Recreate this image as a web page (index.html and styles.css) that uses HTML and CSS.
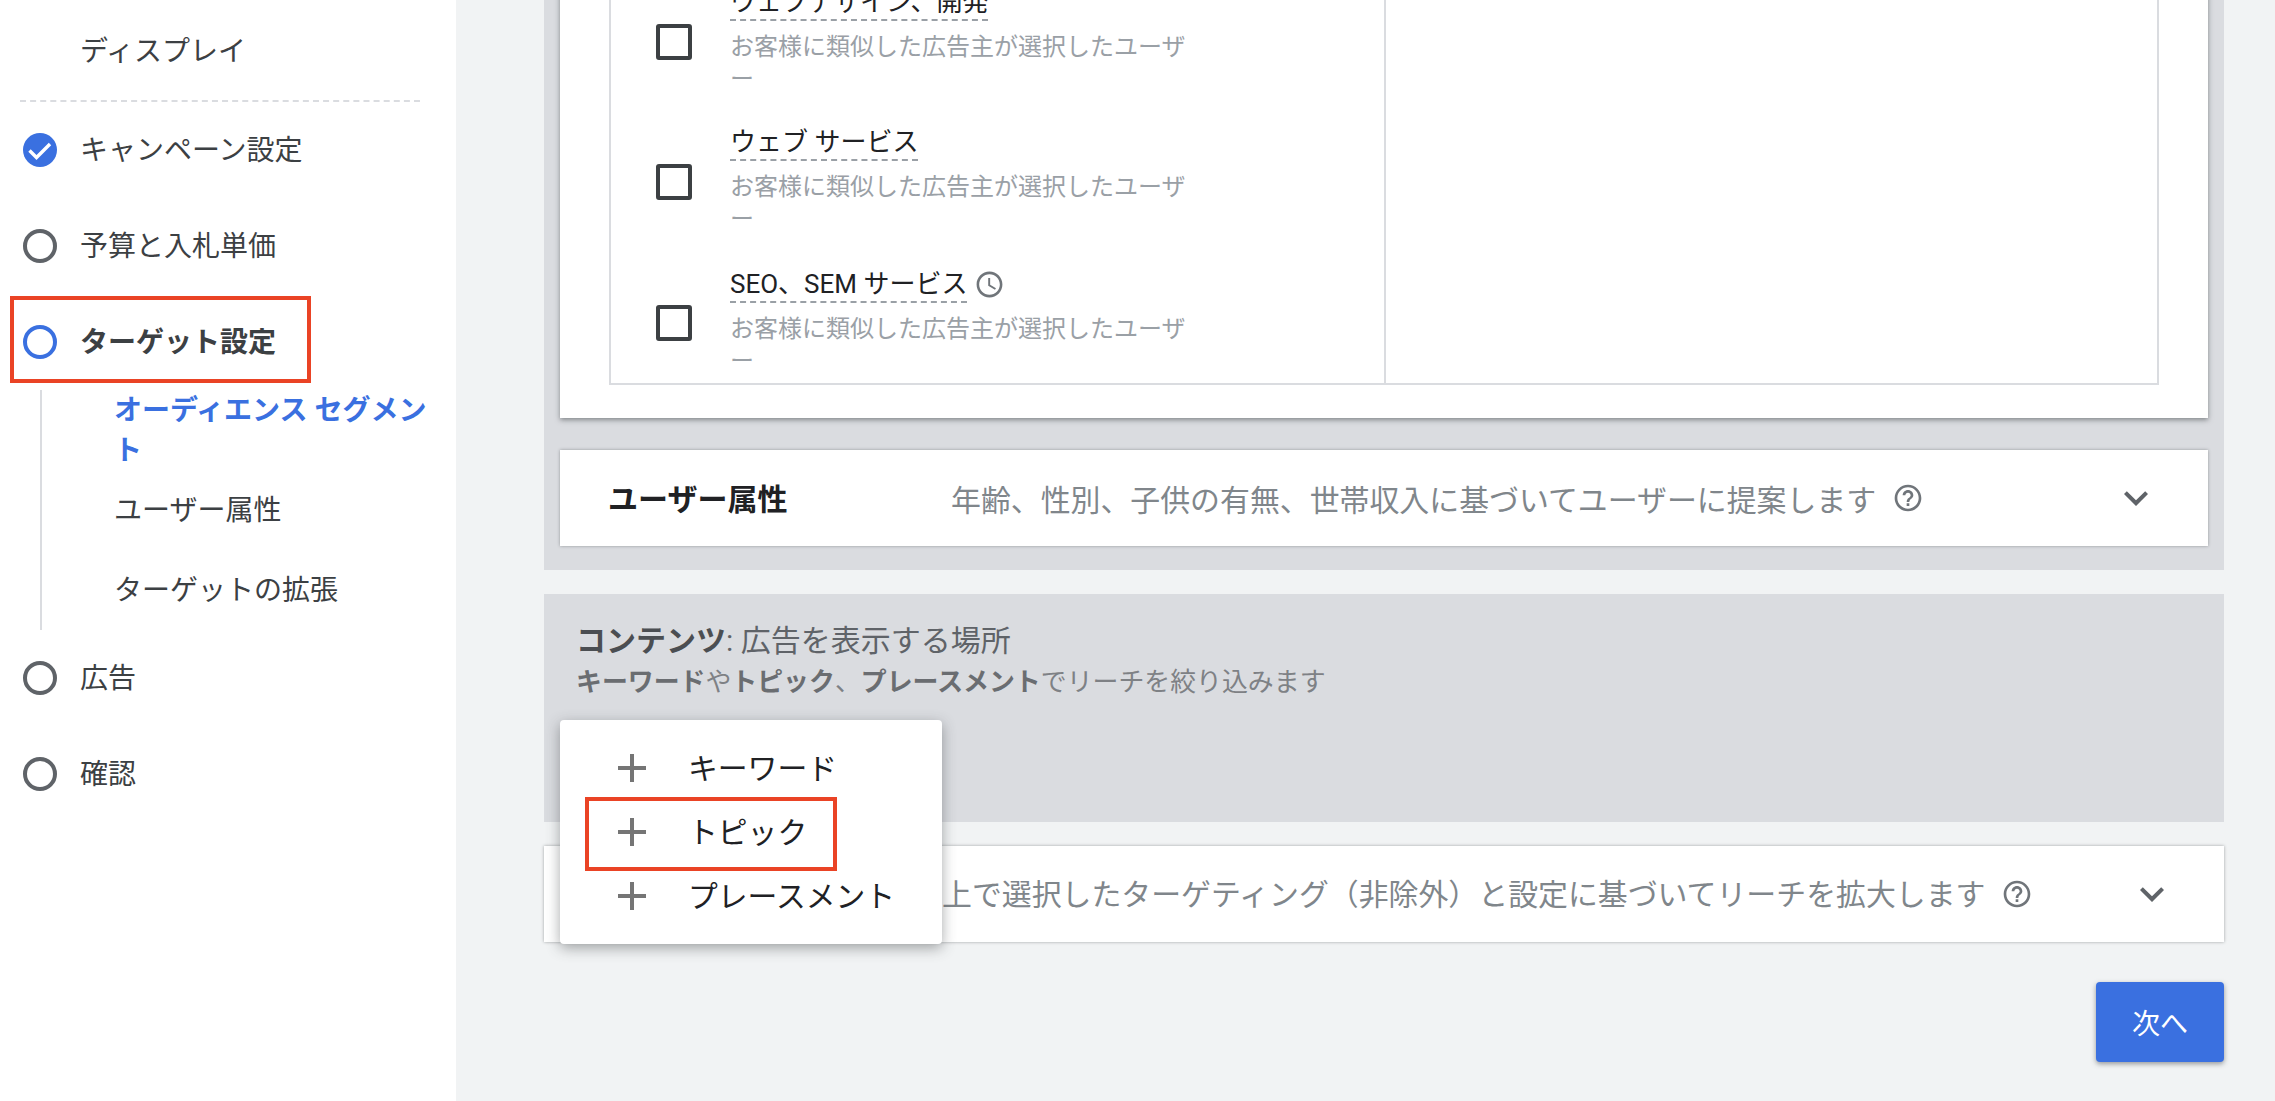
FILE: index.html
```html
<!DOCTYPE html>
<html lang="ja">
<head>
  <meta charset="UTF-8">
  <title>ターゲット設定</title>
  <link rel="stylesheet" href="styles.css">
</head>
<body>
  <div class="page">
    <nav class="sidebar">
      <div class="step"><span class="step-label step-plain">ディスプレイ</span></div>
      <div class="divider"></div>
      <div class="step">
        <svg class="step-check" viewBox="0 0 34 34"><circle cx="17" cy="17" r="17" fill="#3a70e0"/><path d="M6.5 17.5l7 7L27 11" fill="none" stroke="#fff" stroke-width="3.4"/></svg>
        <span class="step-label">キャンペーン設定</span>
      </div>
      <div class="step">
        <span class="step-ring"></span>
        <span class="step-label">予算と入札単価</span>
      </div>
      <div class="step step-active">
        <span class="step-ring"></span>
        <span class="step-label">ターゲット設定</span>
        <div class="mark mark-step"></div>
      </div>
      <ul class="sub-list">
        <li class="sub-item sub-current">オーディエンス セグメント</li>
        <li class="sub-item">ユーザー属性</li>
        <li class="sub-item">ターゲットの拡張</li>
      </ul>
      <div class="step">
        <span class="step-ring"></span>
        <span class="step-label">広告</span>
      </div>
      <div class="step">
        <span class="step-ring"></span>
        <span class="step-label">確認</span>
      </div>
    </nav>

    <main class="main">
      <section class="panel panel-people">
        <div class="card card-segments">
          <div class="segment-table">
            <div class="segment-col">
              <div class="segment-row">
                <span class="checkbox"></span>
                <div class="segment-text">
                  <div class="segment-title"><span class="dashed">ウェブデザイン、開発</span></div>
                  <p class="segment-desc">お客様に類似した広告主が選択したユーザー</p>
                </div>
              </div>
              <div class="segment-row">
                <span class="checkbox"></span>
                <div class="segment-text">
                  <div class="segment-title"><span class="dashed">ウェブ サービス</span></div>
                  <p class="segment-desc">お客様に類似した広告主が選択したユーザー</p>
                </div>
              </div>
              <div class="segment-row segment-row-icon">
                <span class="checkbox"></span>
                <div class="segment-text">
                  <div class="segment-title">
                    <span class="dashed">SEO、SEM サービス</span>
                    <svg class="clock-icon" viewBox="0 0 24 24"><path d="M11.99 2C6.47 2 2 6.48 2 12s4.47 10 9.99 10C17.52 22 22 17.52 22 12S17.52 2 11.99 2zM12 20c-4.42 0-8-3.58-8-8s3.58-8 8-8 8 3.58 8 8-3.58 8-8 8zm.5-13H11v6l5.25 3.15.75-1.23-4.5-2.67z"/></svg>
                  </div>
                  <p class="segment-desc">お客様に類似した広告主が選択したユーザー</p>
                </div>
              </div>
            </div>
            <div class="segment-side"></div>
          </div>
        </div>

        <div class="card card-row">
          <h3 class="row-title">ユーザー属性</h3>
          <span class="row-desc">年齢、性別、子供の有無、世帯収入に基づいてユーザーに提案します</span>
          <svg class="help-icon" viewBox="0 0 24 24"><path d="M11 18h2v-2h-2v2zm1-16C6.48 2 2 6.48 2 12s4.48 10 10 10 10-4.48 10-10S17.52 2 12 2zm0 18c-4.41 0-8-3.59-8-8s3.59-8 8-8 8 3.59 8 8-3.59 8-8 8zm0-14c-2.21 0-4 1.79-4 4h2c0-1.1.9-2 2-2s2 .9 2 2c0 2-3 1.75-3 5h2c0-2.25 3-2.5 3-5 0-2.21-1.79-4-4-4z"/></svg>
          <svg class="chevron" viewBox="0 0 24 24"><path d="M16.59 8.59L12 13.17 7.41 8.59 6 10l6 6 6-6z"/></svg>
        </div>
      </section>

      <section class="panel panel-content">
        <h2 class="content-title"><b>コンテンツ</b>: 広告を表示する場所</h2>
        <p class="content-sub"><b>キーワード</b>や<b>トピック</b>、<b>プレースメント</b>でリーチを絞り込みます</p>

        <div class="menu">
          <div class="menu-item">
            <svg class="plus" viewBox="0 0 24 24"><path d="M19 13h-6v6h-2v-6H5v-2h6V5h2v6h6v2z"/></svg>
            <span>キーワード</span>
          </div>
          <div class="menu-item">
            <svg class="plus" viewBox="0 0 24 24"><path d="M19 13h-6v6h-2v-6H5v-2h6V5h2v6h6v2z"/></svg>
            <span>トピック</span>
          </div>
          <div class="menu-item">
            <svg class="plus" viewBox="0 0 24 24"><path d="M19 13h-6v6h-2v-6H5v-2h6V5h2v6h6v2z"/></svg>
            <span>プレースメント</span>
          </div>
          <div class="mark mark-menu"></div>
        </div>
      </section>

      <div class="card card-row card-expand">
        <span class="row-desc">上で選択したターゲティング（非除外）と設定に基づいてリーチを拡大します</span>
        <svg class="help-icon" viewBox="0 0 24 24"><path d="M11 18h2v-2h-2v2zm1-16C6.48 2 2 6.48 2 12s4.48 10 10 10 10-4.48 10-10S17.52 2 12 2zm0 18c-4.41 0-8-3.59-8-8s3.59-8 8-8 8 3.59 8 8-3.59 8-8 8zm0-14c-2.21 0-4 1.79-4 4h2c0-1.1.9-2 2-2s2 .9 2 2c0 2-3 1.75-3 5h2c0-2.25 3-2.5 3-5 0-2.21-1.79-4-4-4z"/></svg>
        <svg class="chevron" viewBox="0 0 24 24"><path d="M16.59 8.59L12 13.17 7.41 8.59 6 10l6 6 6-6z"/></svg>
      </div>

      <div class="actions">
        <button class="next-btn">次へ</button>
      </div>
    </main>
  </div>
</body>
</html>
```

FILE: styles.css
```css
* {
  box-sizing: border-box;
}

body {
  margin: 0;
  height: 1101px;
  overflow: hidden;
  background-color: #f1f3f4;
  font-family: Roboto, "Noto Sans CJK JP", sans-serif;
  color: #3c4043;
}

h2, h3, p, ul {
  margin: 0;
  padding: 0;
}

.page {
  display: flex;
  height: 1101px;
}

/* left stepper */
.sidebar {
  width: 456px;
  flex: none;
  padding-top: 3px;
  background-color: #fff;
}

.step {
  position: relative;
  display: flex;
  align-items: center;
  height: 96px;
  padding-left: 23px;
  font-size: 28px;
}

.step-label {
  margin-left: 23px;
  padding-bottom: 4px;
}

.step-plain {
  margin-left: 57px;
}

.step-check {
  width: 34px;
  height: 34px;
  flex: none;
}

.step-ring {
  width: 34px;
  height: 34px;
  flex: none;
  border: 4px solid #5f6368;
  border-radius: 50%;
}

.step-active .step-ring {
  border-color: #3a70e0;
}

.step-active .step-label {
  font-weight: bold;
}

.divider {
  margin: 1px 36px 0 20px;
  border-top: 2px dashed #dadce0;
}

.sub-list {
  list-style: none;
  height: 240px;
  margin-left: 40px;
  padding: 1px 22px 0 72px;
  border-left: 2px solid #dadce0;
}

.sub-item {
  padding: 20px 0;
  font-size: 28px;
  line-height: 40px;
}

.sub-current {
  padding: 0;
  color: #3a70e0;
  font-weight: bold;
}

/* red annotation boxes */
.mark {
  position: absolute;
  border: 4px solid #ea4325;
}

.mark-step {
  top: 2px;
  left: 10px;
  width: 301px;
  height: 87px;
}

.mark-menu {
  top: 77px;
  left: 25px;
  width: 252px;
  height: 74px;
}

/* main column */
.main {
  flex: 1;
  padding: 0 51px 0 88px;
}

.panel {
  background-color: #dadce0;
}

.panel-people {
  height: 570px;
  padding: 0 16px;
  overflow: hidden;
}

.card {
  background-color: #fff;
}

.card-segments {
  margin-top: -40px;
  height: 458px;
  padding: 0 49px;
  box-shadow: 0 2px 5px rgba(60, 64, 67, 0.55);
}

.segment-table {
  display: flex;
  height: 425px;
  border: 2px solid #dadce0;
}

.segment-col {
  width: 775px;
  padding-top: 23px;
  border-right: 2px solid #dadce0;
}

.segment-row {
  display: flex;
  align-items: center;
  height: 110px;
  margin-bottom: 30px;
  padding-left: 45px;
}

.segment-row-icon {
  height: 112px;
  margin-top: 2px;
}

.checkbox {
  width: 36px;
  height: 36px;
  flex: none;
  margin-top: 4px;
  border: 4px solid #3c4043;
  border-radius: 3px;
}

.segment-text {
  margin-left: 38px;
  width: 456px;
}

.segment-title {
  display: flex;
  align-items: flex-end;
  height: 36px;
  font-size: 26px;
  line-height: 34px;
  color: #202124;
}

.segment-row-icon .segment-title {
  height: 38px;
}

.dashed {
  border-bottom: 2px dashed #9aa0a6;
}

.clock-icon {
  width: 31px;
  height: 31px;
  margin-left: 7px;
  margin-bottom: 3px;
  fill: #70757a;
}

.segment-desc {
  margin-top: 10px;
  font-size: 24px;
  line-height: 32px;
  color: #9aa0a6;
}

.card-row {
  display: flex;
  align-items: center;
  height: 96px;
  padding-right: 48px;
  box-shadow: 0 0 3px rgba(60, 64, 67, 0.45);
}

.panel-people .card-row {
  margin-top: 32px;
  padding-left: 48px;
}

.row-title {
  width: 343px;
  flex: none;
  font-size: 30px;
  padding-bottom: 2px;
  color: #202124;
}

.row-desc {
  font-size: 29.9px;
  color: #80868b;
}

.help-icon {
  width: 32px;
  height: 32px;
  flex: none;
  margin-left: 16px;
  fill: #70757a;
}

.chevron {
  width: 48px;
  height: 48px;
  flex: none;
  margin-left: auto;
  fill: #5f6368;
}

.panel-content {
  position: relative;
  height: 228px;
  margin-top: 24px;
  padding: 27px 32px 0;
}

.content-title {
  font-size: 30px;
  font-weight: normal;
  line-height: 40px;
  color: #5f6368;
}

.content-title b {
  color: #4b4e52;
}

.content-sub {
  margin-top: 3px;
  font-size: 25.9px;
  line-height: 36px;
  color: #7e8185;
}

.content-sub b {
  color: #6a6d71;
}

.menu {
  position: absolute;
  top: 126px;
  left: 16px;
  width: 382px;
  height: 224px;
  padding: 16px 0;
  background-color: #fff;
  border-radius: 4px;
  box-shadow: 0 4px 14px rgba(60, 64, 67, 0.45);
  z-index: 2;
}

.menu-item {
  display: flex;
  align-items: center;
  height: 64px;
  padding-left: 48px;
  font-size: 29.8px;
  color: #202124;
}

.menu-item span {
  margin-left: 32px;
  padding-bottom: 4px;
}

.plus {
  width: 48px;
  height: 48px;
  flex: none;
  fill: #757575;
}

.card-expand {
  margin-top: 24px;
  padding-left: 398px;
}

.card-expand .row-desc {
  padding-bottom: 4px;
}

.actions {
  display: flex;
  justify-content: flex-end;
  margin-top: 40px;
}

.next-btn {
  width: 128px;
  height: 80px;
  border: none;
  border-radius: 4px;
  background-color: #3a70e0;
  color: #fff;
  font-family: inherit;
  font-size: 28px;
  box-shadow: 0 2px 5px rgba(60, 64, 67, 0.5);
}
```
